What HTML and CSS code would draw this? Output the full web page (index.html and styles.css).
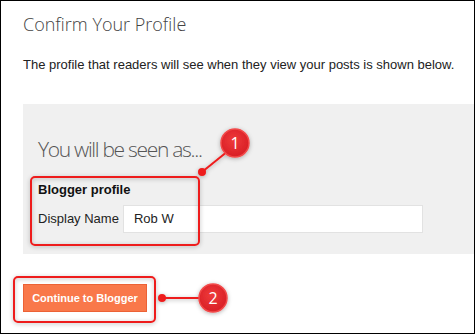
FILE: index.html
```html
<!DOCTYPE html>
<html>
<head>
<meta charset="utf-8">
<link rel="stylesheet" href="styles.css">
</head>
<body>
<div class="frame">
  <h1 class="title">Confirm Your Profile</h1>
  <p class="intro">The profile that readers will see when they view your posts is shown below.</p>
  <section class="panel">
    <h2 class="seen">You will be seen as...</h2>
    <div class="profile">
      <div class="profile-head">Blogger profile</div>
      <div class="field">
        <label class="field-label">Display Name</label>
        <div class="field-input">Rob W</div>
      </div>
    </div>
  </section>
  <button class="continue">Continue to Blogger</button>

  <svg class="annot" width="475" height="334" viewBox="0 0 475 334">
    <defs>
      <filter id="sh" x="-20%" y="-20%" width="140%" height="140%">
        <feDropShadow dx="0" dy="1" stdDeviation="2" flood-color="#000" flood-opacity="0.3"/>
      </filter>
      <radialGradient id="badge" cx="45%" cy="40%" r="60%">
        <stop offset="0" stop-color="#ef3a3a"/>
        <stop offset="1" stop-color="#d81f26"/>
      </radialGradient>
    </defs>
    <g filter="url(#sh)">
      <rect x="31" y="177" width="168" height="68" rx="4" fill="none" stroke="#ee1c1c" stroke-width="2"/>
      <rect x="14" y="277" width="141" height="45" rx="4" fill="none" stroke="#ee1c1c" stroke-width="2"/>
      <line x1="202" y1="172" x2="228" y2="151" stroke="#ee1c1c" stroke-width="2"/>
      <circle cx="202" cy="172" r="4" fill="#ee1c1c"/>
      <line x1="162" y1="298" x2="200" y2="298" stroke="#ee1c1c" stroke-width="2"/>
      <circle cx="162" cy="298" r="4" fill="#ee1c1c"/>
      <circle cx="235" cy="143" r="14" fill="url(#badge)" stroke="#f24a4a" stroke-width="1.5"/>
      <circle cx="213" cy="298" r="14" fill="url(#badge)" stroke="#f24a4a" stroke-width="1.5"/>
    </g>
    <text x="235" y="149" class="num">1</text>
    <text x="213" y="304" class="num">2</text>
  </svg>
</div>
</body>
</html>
```

FILE: styles.css
```css
html, body {
  margin: 0;
  padding: 0;
  background: #fff;
}

.frame {
  position: relative;
  box-sizing: border-box;
  width: 475px;
  height: 334px;
  border: 1px solid #000;
  padding: 11px 0 0 22px;
  overflow: hidden;
  font-family: Arial, "Liberation Sans", sans-serif;
}

.title {
  margin: 0;
  font-family: "Open Sans", sans-serif;
  font-weight: 300;
  font-size: 18px;
  line-height: 24px;
  color: #444;
}

.intro {
  margin: 21px 0 0 0;
  font-size: 13px;
  line-height: 16px;
  color: #222;
}

.panel {
  margin-top: 31px;
  background: #f0f0f0;
  padding: 31px 0 21px 15px;
}

.seen {
  margin: 0;
  font-family: "Open Sans", sans-serif;
  font-weight: 300;
  font-size: 21px;
  letter-spacing: -1.3px;
  line-height: 28px;
  color: #555;
}

.profile {
  margin-top: 19px;
}

.profile-head {
  font-weight: bold;
  font-size: 13px;
  line-height: 16px;
  color: #111;
}

.field {
  display: flex;
  align-items: center;
  margin-top: 7px;
}

.field-label {
  font-size: 13px;
  line-height: 16px;
  color: #222;
  margin-right: 4px;
}

.field-input {
  box-sizing: border-box;
  width: 300px;
  height: 28px;
  background: #fff;
  border: 1px solid #e2e2e2;
  padding-left: 10px;
  font-size: 13px;
  line-height: 26px;
  color: #222;
}

.continue {
  display: block;
  box-sizing: border-box;
  margin-top: 30px;
  width: 124px;
  height: 28px;
  padding: 0;
  background: #f9784a;
  border: 1px solid #ec6236;
  border-radius: 0;
  color: #fff;
  font-family: Arial, "Liberation Sans", sans-serif;
  font-weight: bold;
  font-size: 11px;
  text-align: center;
}

.annot {
  position: absolute;
  left: -1px;
  top: -1px;
  pointer-events: none;
}

.num {
  font-family: "Open Sans", sans-serif;
  font-size: 16px;
  fill: #fff;
  text-anchor: middle;
}
```
